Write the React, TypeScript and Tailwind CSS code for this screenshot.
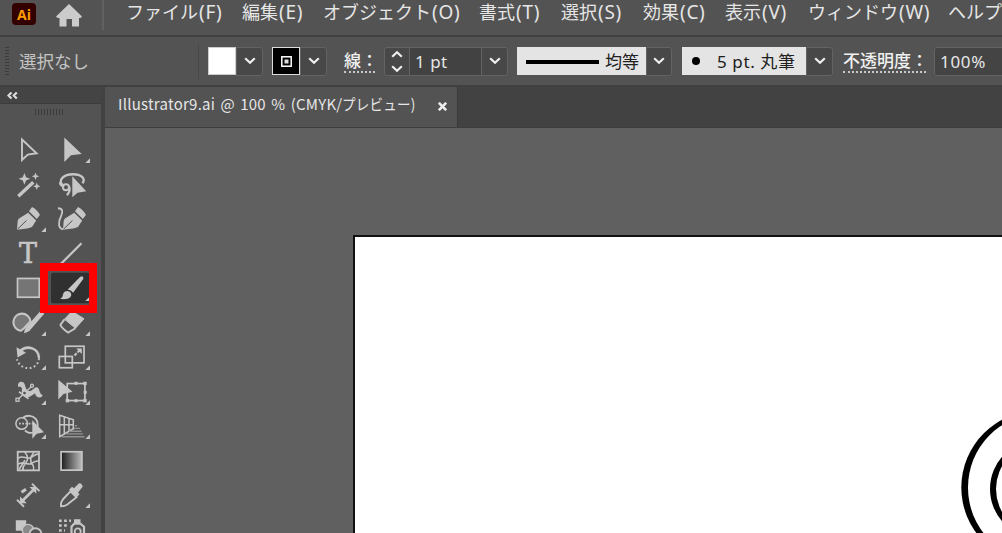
import React from "react";

const C = "#c6c6c6";
const BG = "#535353";

function Tool({ children, corner, active }: { children: React.ReactNode; corner?: boolean; active?: boolean }) {
  return (
    <svg viewBox="-22 -17.25 44 34.5" className="block h-[34.5px] w-[44px] overflow-visible" fill="none" stroke={C} strokeWidth="2">
      {active && <rect x="-21" y="-15.5" width="38.5" height="30.5" rx="2" fill="#303030" stroke="none" />}
      {children}
      {corner && <path d="M18 8v4.7h-4.7z" fill={C} stroke="none" />}
    </svg>
  );
}

function Spark({ x, y, r }: { x: number; y: number; r: number }) {
  const k = r * 0.28;
  return (
    <path
      d={`M${x} ${y - r}L${x + k} ${y - k}L${x + r} ${y}L${x + k} ${y + k}L${x} ${y + r}L${x - k} ${y + k}L${x - r} ${y}L${x - k} ${y - k}Z`}
      fill={C}
      stroke="none"
    />
  );
}

function Nib() {
  return (
    <g>
      <path d="M-11 10.4L-10.3 1.5Q-10-1-7-2L.2-6.4L8.2 1.2L4.5 7Q3.5 8.5-1 9.2Z" fill={C} stroke="none" />
      <path d="M1-8L4-12.3Q9.5-9.5 11.9-4.3L8.8-.3Z" fill={C} stroke="none" />
      <path d="M-10.4 9.8L-1.5 1.2" stroke={BG} strokeWidth="1" />
    </g>
  );
}

function Tools() {
  return (
    <div className="grid grid-cols-[44px_44px] pl-[6px]">
      <Tool><path d="M-6-10.8V9.8L-.2 4.3L8.6 3Z" strokeWidth="1.9" /></Tool>
      <Tool corner><path d="M-7.7-12.7V11.7L-1 5L9.7 3.7Z" fill={C} stroke="none" /></Tool>

      <Tool>
        <path d="M-9.7 11L5.3-3" strokeWidth="3.4" />
        <Spark x={-3.6} y={-6.4} r={5.8} />
        <Spark x={7.5} y={-9} r={3.8} />
        <Spark x={8.8} y={1} r={3.8} />
      </Tool>
      <Tool>
        <path d="M-9 0C-15-5-8-11 1-11C9-11 14-7 10.5-2" strokeWidth="2.3" />
        <circle cx="-6" cy="2" r="3" strokeWidth="2" />
        <path d="M-3 1Q-1 5-5 10M-9 1Q-12 0-12-3" strokeWidth="2.2" />
        <path d="M.3-9V12L5.5 7.5L14.2 6Z" fill={C} stroke="none" />
      </Tool>

      <Tool corner><Nib /></Tool>
      <Tool>
        <g transform="translate(2 0)"><Nib /></g>
        <path d="M-14-11C-9-11-9-7-11-3C-14 3-14 9-9 10" strokeWidth="1.8" />
      </Tool>

      <Tool>
        <text x="0" y="9.2" textAnchor="middle" fill={C} stroke={C} strokeWidth=".6" className="font-['DejaVu_Serif'] text-[27px]">T</text>
      </Tool>
      <Tool corner><path d="M-11 9.5L9.5-11" strokeWidth="2.2" /></Tool>

      <Tool><rect x="-10.5" y="-9.8" width="21.8" height="18.8" fill="#757575" strokeWidth="1.7" /></Tool>
      <Tool corner active>
        <path d="M-12.5 10.5C-9 10-9.5 7-8.5 4.7C-7 1.8-2.5 2-1 5C.5 9-4 12-12.5 10.5Z" fill={C} stroke="none" />
        <path d="M-4.3 1.2L8.3-11.4Q11.5-13.5 11.4-9.4L1.1 4.6Q-1 1.5-4.3 1.2Z" fill={C} stroke="none" />
      </Tool>

      <Tool corner>
        <path d="M-7 7.5A8.6 8.6 0 1 1 2.5-2L-4 5Z" fill="#777" strokeWidth="2.1" />
        <path d="M12-11.8Q16-13.5 15.8-9L2 7Q-.5 9.5-4 10Q-4 7-2 4Z" fill={C} stroke="none" />
      </Tool>
      <Tool corner>
        <path d="M0-12L12-4.5L3.5 5L-7.5-4Z" fill={C} stroke={C} strokeWidth="1" />
        <path d="M-7.5-4L-11.5 1.5Q-11.3 4-4 9.3L3.5 5" strokeWidth="2" />
      </Tool>

      <Tool corner>
        <path d="M-8-6C-1-13 11-9 11 1" strokeWidth="2.5" />
        <path d="M-11.5-10L-10.5 .2L-2-4.5Z" fill={C} stroke="none" />
        <path d="M11 1C10 14-8 14-11 2" strokeWidth="2" strokeDasharray="1.8 2.5" />
      </Tool>
      <Tool corner>
        <rect x="-6.7" y="-11" width="18.7" height="16.6" strokeWidth="1.7" />
        <rect x="-12.7" y="-.8" width="13" height="11.3" strokeWidth="1.7" />
        <path d="M2.5-1.8L8.5-7.8" strokeDasharray="3 1.2" />
        <path d="M4.2-8.8H9.8V-3.2Z" fill={C} stroke="none" />
      </Tool>

      <Tool corner>
        <path d="M-9.5-5C-12-11-4-13-3-7C-2-2 1 1 5-3C10-8 11-3 12 0Q13 3 14.5 2.5C15 6 8 7 7 1C4 3 0 7-4 4Q-7 2-6-4Q-8-7-9.5-5Z" fill={C} stroke="none" />
        <path d="M-10.5 7.5L4.3-6.5" strokeWidth="1.3" />
        <path d="M-9-.5L.5 6.5" strokeWidth="1.6" />
        <g fill={BG} strokeWidth="1.3"><rect x="-12" y="6" width="3" height="3" /><circle cx="-3.5" cy=".8" r="2" /><circle cx="4" cy="-6.5" r="1.5" /></g>
      </Tool>
      <Tool corner>
        <rect x="-4.8" y="-8.7" width="17.7" height="17" strokeWidth="1.7" />
        <g fill={C} stroke="none">
          <rect x="2.5" y="-10.5" width="3" height="3" /><rect x="11.3" y="-10.5" width="3.4" height="3.4" />
          <rect x="11.7" y="-1.5" width="3" height="3" /><rect x="11.3" y="6.7" width="3.4" height="3.4" />
          <rect x="2.5" y="7" width="3" height="3" /><rect x="-6.3" y="6.7" width="3.4" height="3.4" />
        </g>
        <path d="M-13.7-12.5V7.2L-8.5 1.8L.5-.5Z" fill={C} stroke="none" />
      </Tool>

      <Tool corner>
        <path d="M-5-8.5A8.3 7.8 0 1 1 6.5 4.6M-3 4.2Q1 8 5 6" strokeWidth="1.9" />
        <circle cx="-6.3" cy="-2.7" r="5.8" strokeWidth="1.5" />
        <path d="M-9-2.7H5" strokeDasharray="1.8 1.4" strokeWidth="1.8" />
        <path d="M4.3-6V12.5L8.7 7.5L16 6Z" fill={C} stroke="none" />
      </Tool>
      <Tool corner>
        <path d="M-12.3-11L1.3-6.5V2.5L-12.3 10.5ZM-7.7-9.5V7.7M-3-8V5M-12.3-1.5H1.3" strokeWidth="1.5" />
        <g stroke="#929292" strokeWidth="1.3"><path d="M3-.5H5M2 2.2H8M-3 5H9.5M-6 7.7H11M-10.5 10.5H12.5" /></g>
      </Tool>

      <Tool>
        <rect x="-10.3" y="-9.5" width="21.3" height="18.6" strokeWidth="1.8" />
        <path d="M-10-3C-5-6-3-3 0-3C5-3 6-8 11-7M-10 3C-4-1 0 5 4 2C7 0 8-1 11 0M-3.5-9.5C2-3-1 0-3 3Q-6 6-5 9M6-9C1-3 2 1 5 4Q6 6 5.5 9M-9 8L-3-1" strokeWidth="1.6" />
      </Tool>
      <Tool>
        <defs><linearGradient id="ramp"><stop stopColor="#1c1c1c" /><stop offset="1" stopColor="#bcbcbc" /></linearGradient></defs>
        <rect x="-10.9" y="-9.5" width="20.8" height="18.4" fill="url(#ramp)" strokeWidth="1.7" />
      </Tool>

      <Tool>
        <path d="M-5.5 5.5L6.5-6.5" strokeWidth="2.6" />
        <path d="M-11 4.5L-4 11.5M4-11.5L11.5-4.2" strokeWidth="1.8" />
        <path d="M-8 8V1.2L-1.2 8ZM8.3-8.3V-1.5L1.5-8.3Z" fill={C} stroke="none" />
        <path d="M-6.5-3L-2-6" strokeWidth="3.2" />
      </Tool>
      <Tool corner>
        <path d="M-1.5-4L4.5 2L-5 9.5Q-7 11-11 11Q-11.5 7-9 4Z" strokeWidth="1.9" />
        <path d="M-3-5.5L0-8.5L2-7L7-12Q10-12.5 10.7-8.5L6-2.8L7.5-1L4.7 2Z" fill={C} stroke="none" />
      </Tool>

      <Tool>
        <rect x="-12.2" y="-10" width="10.4" height="10.5" fill={C} stroke="none" />
        <circle cx="0" cy="-.2" r="5.7" fill="#888" strokeWidth="1.4" />
        <circle cx="7.5" cy="4" r="6" fill={BG} strokeWidth="1.8" />
      </Tool>
      <Tool>
        <path d="M-13-9.5H-1M-13-4.7H-3M-13 .2H-7" strokeWidth="2.5" strokeDasharray="2.7 2.4" />
        <path d="M2-11H8.5V-7H2Z" fill={C} stroke="none" />
        <path d="M-.5 6V-3.5L2-6.5H8.5L12-3.5V6" strokeWidth="2.2" />
        <circle cx="5.7" cy="1.2" r="3" strokeWidth="1.8" />
      </Tool>
    </div>
  );
}

function Chevron() {
  return (
    <svg viewBox="0 0 12 8" className="h-2 w-3" fill="none" stroke="#eee" strokeWidth="2.2"><path d="M1.2 1.2L6 5.8L10.8 1.2" /></svg>
  );
}

function Drop({ className }: { className: string }) {
  return <div className={`flex h-[29px] shrink-0 items-center justify-center rounded-r-[3px] border border-[#636363] bg-[#484848] ${className}`}><Chevron /></div>;
}

const menus = [
  { kana: "ファイル", key: "(F)", w: "w-[116px]" },
  { kana: "編集", key: "(E)", w: "w-[81px]" },
  { kana: "オブジェクト", key: "(O)", w: "w-[156px]" },
  { kana: "書式", key: "(T)", w: "w-[82px]" },
  { kana: "選択", key: "(S)", w: "w-[82px]" },
  { kana: "効果", key: "(C)", w: "w-[82px]" },
  { kana: "表示", key: "(V)", w: "w-[83px]" },
  { kana: "ウィンドウ", key: "(W)", w: "w-[140px]" },
  { kana: "ヘルプ", key: "", w: "w-[54px]" },
];

export default function App() {
  return (
    <div className="relative flex h-[533px] w-[1002px] flex-col overflow-hidden bg-[#535353] font-['Noto_Sans','Noto_Sans_CJK_JP',sans-serif] text-[#e6e6e6]">
      <header className="flex h-[37px] shrink-0 border-b-2 border-[#404040]">
        <div className="mt-[3px] ml-[12px] flex h-[22px] w-[24px] shrink-0 items-center justify-center rounded-[4px] bg-[#330000] font-['Open_Sans',sans-serif] text-[14px] font-bold text-[#ff9a00]">Ai</div>
        <svg viewBox="0 0 26 23" className="mt-[4px] ml-[20px] h-[23px] w-[26px] shrink-0" fill="#cbcbcb"><path d="M13 0L26 12.5L24.5 14H23V22.5H16V15H10.5V22.5H3.5V14H1.5L0 12.5Z" /></svg>
        <div className="ml-[20px] h-[30px] w-[2px] shrink-0 bg-[#616161]" />
        <nav className="ml-[22px] flex text-[18px] leading-[24px] whitespace-nowrap">
          {menus.map((m) => (
            <span key={m.kana} className={`shrink-0 ${m.w}`}>{m.kana}<span className="ml-[1px] text-[19px] tracking-[0.7px]">{m.key}</span></span>
          ))}
        </nav>
      </header>

      <div className="flex h-[50px] shrink-0 items-center border-b-2 border-[#404040] text-[17px] whitespace-nowrap">
        <div className="ml-[5px] h-[28px] w-[4px] shrink-0 bg-[repeating-linear-gradient(to_bottom,#3b3b3b_0_1px,#535353_1px_3px)]" />
        <span className="ml-[10px] w-[179px] shrink-0 text-[17.5px] text-[#c4c4c4]">選択なし</span>
        <div className="h-[35px] w-px shrink-0 bg-[#484848]" />
        <div className="ml-[9px] h-[28px] w-[28px] shrink-0 border border-[#ccc] bg-white" />
        <Drop className="w-[27px]" />
        <div className="ml-[9px] flex h-[28px] w-[28px] shrink-0 items-center justify-center border border-[#ddd] bg-black">
          <svg viewBox="0 0 11 11" className="h-[11px] w-[11px]"><rect x=".8" y=".8" width="9.4" height="9.4" fill="none" stroke="#fff" strokeWidth="1.5" /><rect x="3.5" y="3.5" width="4" height="4" fill="#ddd" /></svg>
        </div>
        <Drop className="w-[27px]" />
        <span className="ml-[17px] h-[24px] w-[31px] shrink-0 border-b-2 border-dotted border-[#c9c9c9] leading-[24px] font-medium text-[#f0f0f0]">線：</span>
        <div className="ml-[9px] flex h-[29px] w-[26px] shrink-0 flex-col items-center justify-center gap-[7px] rounded-l-[3px] border border-[#636363] bg-[#484848]">
          <div className="flex rotate-180"><Chevron /></div>
          <Chevron />
        </div>
        <div className="flex h-[29px] w-[71px] shrink-0 items-center border-y border-[#636363] bg-[#424242] pt-[2px] pl-[5px] tracking-[0.5px]">1 pt</div>
        <Drop className="w-[27px]" />
        <div className="ml-[9px] flex h-[28px] w-[129px] shrink-0 items-center bg-[#e4e4e4] text-[#202020]">
          <div className="mt-[2px] ml-[9px] h-[4px] w-[73px] bg-black" />
          <span className="mt-[2px] ml-[6px]">均等</span>
        </div>
        <Drop className="w-[26px]" />
        <div className="ml-[10px] flex h-[28px] w-[124px] shrink-0 items-center bg-[#e4e4e4] text-[#202020]">
          <div className="ml-[10px] h-[8px] w-[8px] rounded-full bg-black" />
          <span className="mt-[2px] ml-[17px] tracking-[0.6px]">5 pt. 丸筆</span>
        </div>
        <Drop className="w-[27px]" />
        <span className="ml-[10px] h-[24px] w-[83px] shrink-0 border-b-2 border-dotted border-[#c9c9c9] leading-[24px] font-medium text-[#f0f0f0]">不透明度：</span>
        <div className="ml-[8px] flex h-[29px] w-[80px] shrink-0 items-center rounded-l-[3px] border border-[#636363] bg-[#444] pt-[2px] pl-[5px] tracking-[0.7px]">100%</div>
      </div>

      <div className="flex min-h-0 flex-1">
        <aside className="w-[105px] shrink-0 border-r-4 border-[#424242]">
          <div className="flex h-[17px] items-center border-b border-[#3c3c3c] bg-[#444] pl-[7px]">
            <svg viewBox="0 0 11 7" className="h-[7px] w-[11px]" fill="none" stroke="#ddd" strokeWidth="2.2"><path d="M4.5 .5L1.5 3.5L4.5 6.5M9.8 .5L6.8 3.5L9.8 6.5" /></svg>
          </div>
          <div className="mt-[5px] ml-[35px] h-[6px] w-[28px] bg-[repeating-linear-gradient(to_right,#3a3a3a_0_1px,#535353_1px_3px)]" />
          <div className="pt-[18px]"><Tools /></div>
        </aside>

        <main className="flex min-w-0 flex-1 flex-col bg-[#606060]">
          <div className="flex h-[41px] shrink-0 border-b border-[#3d3d3d] bg-[#424242]">
            <div className="flex w-[353px] items-start border-r border-[#393939] bg-[#535353] font-['Noto_Sans_CJK_JP',sans-serif]">
              <span className="mt-[6px] ml-[13px] w-[320px] text-[15px] leading-[22px] tracking-[0.25px] whitespace-nowrap [word-spacing:1.7px]">Illustrator9.ai @ 100 % (CMYK/<span className="inline-block w-[72px] origin-left scale-x-[.9]">プレビュー)</span></span>
              <svg viewBox="0 0 9 9" className="mt-[15px] h-[9px] w-[9px] shrink-0" stroke="#eee" strokeWidth="2.6"><path d="M.8 .8L8.2 8.2M8.2 .8L.8 8.2" /></svg>
            </div>
          </div>
          <div className="min-h-0 flex-1 pt-[107px] pl-[248px]">
            <div className="h-full border-t-2 border-l-2 border-[#111] bg-white">
              <svg viewBox="355 237 647 296" className="block h-[296px] w-[647px]">
                <ellipse cx="1039" cy="487.5" rx="77.7" ry="77" />
                <ellipse cx="1039" cy="487.5" rx="71" ry="73" fill="#fff" />
                <ellipse cx="1040" cy="489" rx="50" ry="49.5" />
                <ellipse cx="1040" cy="489" rx="44" ry="45" fill="#fff" />
              </svg>
            </div>
          </div>
        </main>
      </div>

      <div className="absolute top-[263px] left-[40px] h-[50px] w-[57px] border-8 border-[#fe0000]" />
    </div>
  );
}
